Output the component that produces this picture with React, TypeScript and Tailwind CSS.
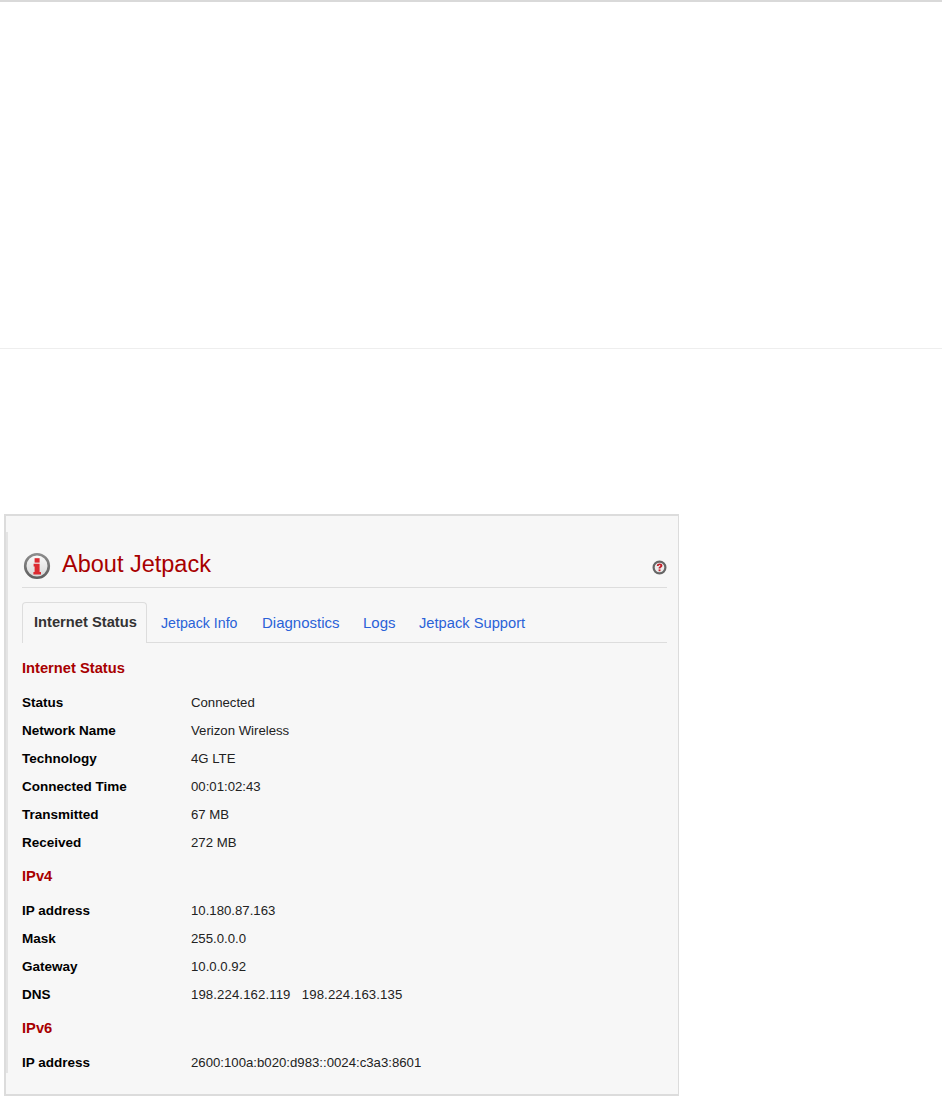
import React from 'react';

const sans = 'font-["Liberation_Sans",Arial,sans-serif]';

const InfoIcon = () => (
  <svg width="28" height="28" viewBox="0 0 28 28">
    <defs>
      <linearGradient id="infoFill" x1="0" y1="0" x2="0" y2="1">
        <stop offset="0" stopColor="#fbfbfb" />
        <stop offset="1" stopColor="#d6d6d6" />
      </linearGradient>
      <linearGradient id="infoRing" x1="0" y1="0" x2="0" y2="1">
        <stop offset="0" stopColor="#8c8c8c" />
        <stop offset="1" stopColor="#5f5f5f" />
      </linearGradient>
    </defs>
    <circle cx="14" cy="14" r="11.8" fill="url(#infoFill)" stroke="url(#infoRing)" strokeWidth="2.6" />
    <rect x="11.600" y="6.200" width="5" height="4.400" fill="#dc2a30" />
    <path d="M10.600 11.800h6v8.200h1.400v2.600h-7.600v-2.600h1.200v-5.600h-1z" fill="#dc2a30" />
  </svg>
);

const HelpIcon = () => (
  <svg width="15" height="15" viewBox="0 0 15 15">
    <circle cx="7.500" cy="7.500" r="5.900" fill="#ececec" stroke="#666666" strokeWidth="2.200" />
    <path d="M4.800 5.900c0-1.700 1.100-2.500 2.800-2.500s2.800.8 2.800 2.200c0 1.100-.6 1.600-1.300 2-.5.3-.7.500-.7 1H6.600c0-1 .3-1.500 1-2 .5-.3.800-.5.800-.9 0-.4-.3-.6-.8-.6-.6 0-.9.300-.9.800z" fill="#c4202a" />
    <rect x="6.600" y="9.400" width="1.900" height="1.800" fill="#c4202a" />
  </svg>
);

const Row = ({ label, value, valueClass = '' }: { label: string; value: string; valueClass?: string }) => (
  <div className="flex h-7 items-center">
    <div className="w-[169px] text-[13.500px] font-bold text-black">{label}</div>
    <div className={`text-[13.200px] whitespace-pre text-[#222222] ${valueClass}`}>{value}</div>
  </div>
);

const SectionTitle = ({ children }: { children: React.ReactNode }) => (
  <h4 className="h-[28px] text-[14.700px] leading-[28px] font-bold text-[#a80000]">{children}</h4>
);

export default function App() {
  const tabs = [
    { label: 'Jetpack Info', className: 'w-[101px] pt-[11px] text-[14.200px]' },
    { label: 'Diagnostics', className: 'w-[101px] pt-[10px] text-[15px]' },
    { label: 'Logs', className: 'w-[56px] pt-[10px] text-[15px]' },
    { label: 'Jetpack Support', className: 'pt-[10px] text-[14.700px]' },
  ];

  return (
    <div className={`h-[1096px] overflow-hidden bg-white ${sans}`}>
      <div className="h-[2px] bg-[#d9d9d9]" />
      <div className="mt-[346px] h-px bg-[#eeeeee]" />

      <div className="mt-[165px] ml-1 h-[582px] w-[675px] border-2 border-r border-[#dcdcdc] bg-[#f7f7f7] pt-[16px] pr-[11px]">
        <div className="h-[541px] border-l-2 border-[#e4e4e4] pl-[14px]">
          <div className="flex h-[56px] items-center border-b border-[#dddddd] pt-[13px]">
            <div className="ml-px">
              <InfoIcon />
            </div>
            <h1 className="ml-[11px] -translate-y-px text-[23.500px] leading-none text-[#a80000]">About Jetpack</h1>
            <div className="mt-[3px] ml-auto">
              <HelpIcon />
            </div>
          </div>

          <div className="mt-[14px] flex h-[41px] border-b border-[#dddddd]">
            <div className="h-[41px] w-[125px] rounded-t border border-b-0 border-[#dddddd] bg-[#f7f7f7] pt-[8px] pl-[11px] text-[14.700px] font-bold text-[#333333]">
              Internet Status
            </div>
            <div className="flex pl-[14px]">
              {tabs.map((tab) => (
                <a key={tab.label} className={`text-[#2a62d8] ${tab.className}`}>
                  {tab.label}
                </a>
              ))}
            </div>
          </div>

          <div className="mt-[11px]">
            <SectionTitle>Internet Status</SectionTitle>
            <div className="mt-[7px]">
              <Row label="Status" value="Connected" />
              <Row label="Network Name" value="Verizon Wireless" />
              <Row label="Technology" value="4G LTE" />
              <Row label="Connected Time" value="00:01:02:43" />
              <Row label="Transmitted" value="67 MB" />
              <Row label="Received" value="272 MB" />
            </div>
          </div>

          <div className="mt-[5px]">
            <SectionTitle>IPv4</SectionTitle>
            <div className="mt-[7px]">
              <Row label="IP address" value="10.180.87.163" />
              <Row label="Mask" value="255.0.0.0" />
              <Row label="Gateway" value="10.0.0.92" />
              <Row label="DNS" value="198.224.162.119   198.224.163.135" valueClass="tracking-[0.1px]" />
            </div>
          </div>

          <div className="mt-[5px]">
            <SectionTitle>IPv6</SectionTitle>
            <div className="mt-[7px]">
              <Row label="IP address" value="2600:100a:b020:d983::0024:c3a3:8601" />
            </div>
          </div>
        </div>
      </div>
    </div>
  );
}
